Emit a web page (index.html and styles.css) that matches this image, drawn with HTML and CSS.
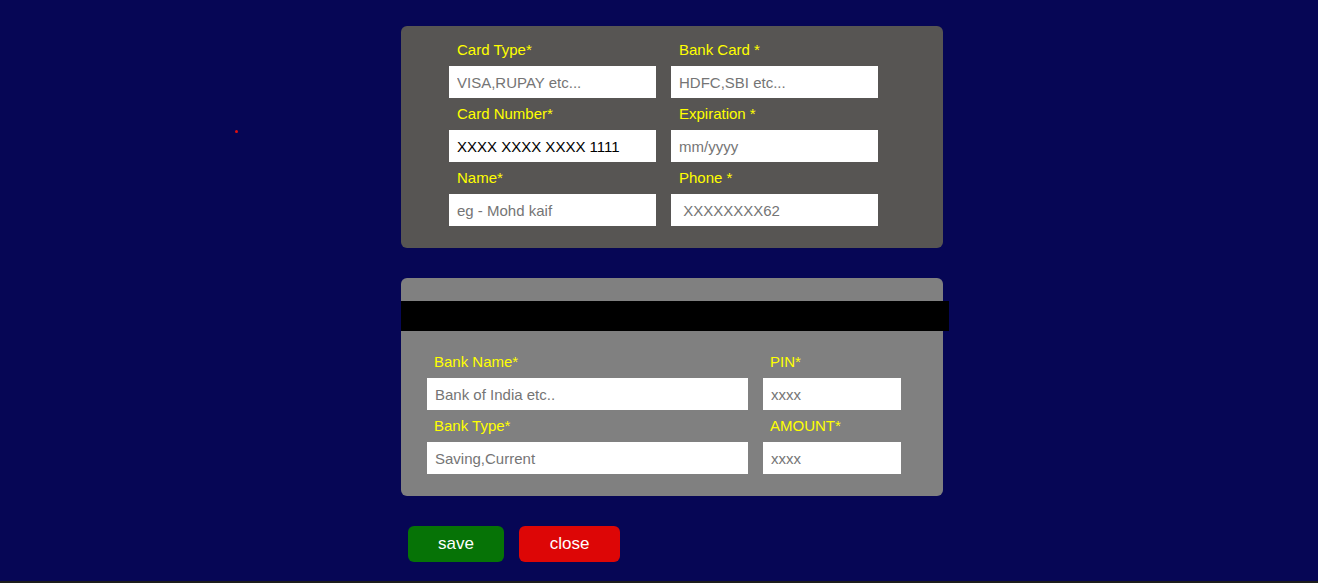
FILE: index.html
```html
<!DOCTYPE html>
<html>
<head>
<meta charset="utf-8">
<link rel="stylesheet" href="styles.css">
</head>
<body>
<div class="page">
  <main class="main">
    <span class="dot"></span>
    <div class="stack">
      <section class="card card-front">
        <div class="grid grid-front">
          <div class="field">
            <label class="lbl">Card Type*</label>
            <input class="inp" type="text" placeholder="VISA,RUPAY etc...">
          </div>
          <div class="field">
            <label class="lbl">Bank Card *</label>
            <input class="inp" type="text" placeholder="HDFC,SBI etc...">
          </div>
          <div class="field">
            <label class="lbl">Card Number*</label>
            <input class="inp" type="text" value="XXXX XXXX XXXX 1111">
          </div>
          <div class="field">
            <label class="lbl">Expiration *</label>
            <input class="inp" type="text" placeholder="mm/yyyy">
          </div>
          <div class="field">
            <label class="lbl">Name*</label>
            <input class="inp" type="text" placeholder="eg - Mohd kaif">
          </div>
          <div class="field">
            <label class="lbl">Phone *</label>
            <input class="inp" type="text" placeholder=" XXXXXXXX62">
          </div>
        </div>
      </section>
      <section class="card card-back">
        <div class="stripe"></div>
        <div class="grid grid-back">
          <div class="field">
            <label class="lbl lbl-back">Bank Name*</label>
            <input class="inp" type="text" placeholder="Bank of India etc..">
          </div>
          <div class="field">
            <label class="lbl lbl-back">PIN*</label>
            <input class="inp" type="text" placeholder="xxxx">
          </div>
          <div class="field">
            <label class="lbl lbl-back">Bank Type*</label>
            <input class="inp" type="text" placeholder="Saving,Current">
          </div>
          <div class="field">
            <label class="lbl lbl-back">AMOUNT*</label>
            <input class="inp" type="text" placeholder="xxxx">
          </div>
        </div>
      </section>
      <div class="actions">
        <button class="btn btn-save">save</button>
        <button class="btn btn-close">close</button>
      </div>
    </div>
  </main>
  <footer class="bar"></footer>
</div>
</body>
</html>
```

FILE: styles.css
```css
html, body {
  margin: 0;
  padding: 0;
}
body {
  background: #060655;
  font-family: "Liberation Sans", Arial, sans-serif;
  overflow: hidden;
}
.page {
  height: 583px;
  display: flex;
  flex-direction: column;
}
.main {
  flex: 1;
  position: relative;
  padding: 26px 0 0 401px;
}
.dot {
  position: absolute;
  left: 235px;
  top: 130px;
  width: 3px;
  height: 3px;
  border-radius: 50%;
  background: #e01010;
}
.stack {
  width: 542px;
  display: flex;
  flex-direction: column;
  gap: 30px;
}
.card {
  border-radius: 6px;
  box-sizing: border-box;
}
.card-front {
  background: #575553;
  padding: 8px 0 22px 48px;
}
.card-back {
  background: #808080;
  padding: 23px 0 22px 0;
}
.stripe {
  height: 30px;
  width: 548px;
  background: #000;
  margin-bottom: 15px;
}
.grid {
  display: grid;
  column-gap: 15px;
}
.grid-front {
  grid-template-columns: 207px 207px;
}
.grid-back {
  grid-template-columns: 321px 138px;
  padding-left: 26px;
}
.field {
  display: flex;
  flex-direction: column;
}
.lbl {
  display: block;
  height: 32px;
  line-height: 32px;
  padding-left: 8px;
  color: #ffff00;
  font-size: 15px;
}
.lbl-back {
  padding-left: 7px;
}
.inp {
  height: 32px;
  box-sizing: border-box;
  border: none;
  outline: none;
  margin: 0;
  padding: 0 8px;
  background: #fff;
  font-family: "Liberation Sans", Arial, sans-serif;
  font-size: 15px;
  color: #000;
}
.inp::placeholder {
  color: #757575;
}
.actions {
  display: flex;
  gap: 15px;
  padding-left: 7px;
}
.btn {
  height: 36px;
  border: none;
  border-radius: 6px;
  color: #fff;
  font-family: "Liberation Sans", Arial, sans-serif;
  font-size: 17px;
  padding: 0;
}
.btn-save {
  width: 96px;
  background: #067306;
}
.btn-close {
  width: 101px;
  background: #dd0606;
}
.bar {
  height: 2px;
  background: #1c1c1c;
}
```
